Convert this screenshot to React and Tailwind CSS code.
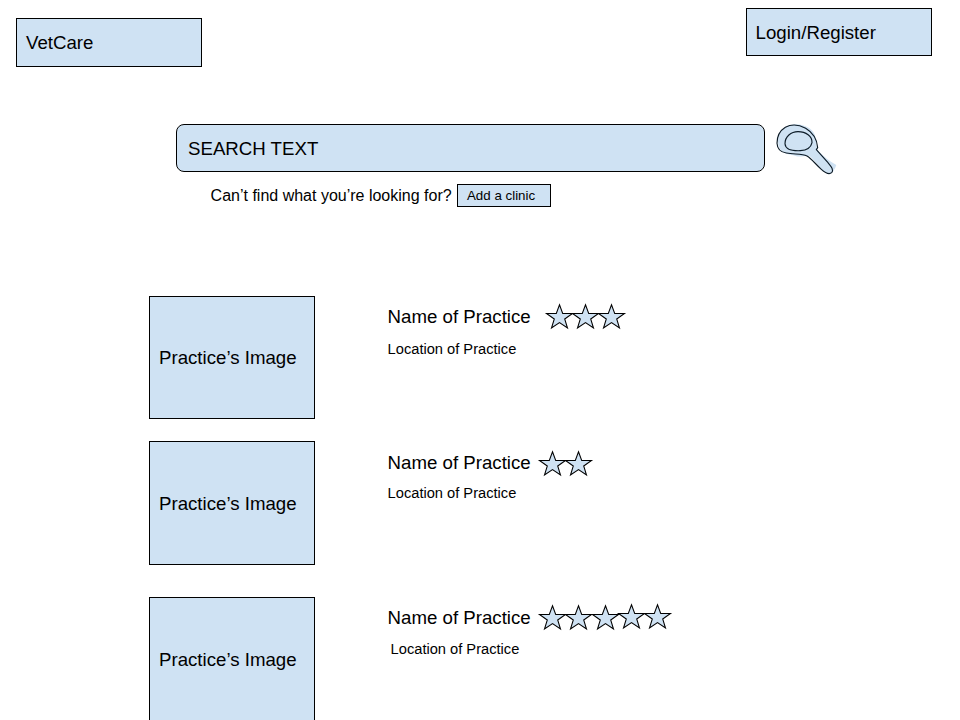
const FONT = "font-['Liberation_Sans',Arial,sans-serif]";

function Star({ raised, spaced }) {
  return (
    <svg
      className={`block w-[26px] h-[26px] shrink-0 overflow-visible ${raised ? "-mt-px" : ""} ${spaced ? "ml-px" : ""}`}
      viewBox="0 0 26 26"
    >
      <path
        d="M13.5 .7L16.7 9.5H26.5L18.7 15L21.5 24L13.5 18.6L5.5 24L8.3 15L.5 9.5H10.3Z"
        fill="#cfe2f3"
        stroke="#000"
        strokeWidth="1.05"
      />
    </svg>
  );
}

function Magnifier() {
  return (
    <svg className="block w-[90px] h-[75px] shrink-0" viewBox="0 0 270 225">
      <path
        d="M54 95C54 65 75 45 105 43C135 42 165 60 166 82C170 100 167 112 175 123C192 140 208 154 229 165C224 180 216 192 204 191C180 180 170 155 148 138C130 136 120 144 100 136C75 132 54 122 54 95Z"
        fill="#cfe2f3"
      />
      <g fill="none" stroke="#0b1a26" strokeWidth="3.4" strokeLinecap="round">
        <path d="M169 119L173 113C171 88 159 68 137 55C117 44 94 42 76 52C60 62 51 79 51 100C52 117 62 127 79 129C100 134 125 130 141 138C155 146 168 164 184 178C195 188 208 194 215 188C222 179 214 170 204 158L171 121" />
        <path d="M75 101C75 80 93 65 114 65C138 65 157 79 156 98C153 112 140 121 121 122C97 123 76 119 75 101Z" />
      </g>
    </svg>
  );
}

function Practice({ stars, raisedFrom = 99, spacedAt = 99, rowClass, imageClass, nameClass, starsClass, locationClass }) {
  return (
    <article className={`flex shrink-0 items-start ${rowClass}`}>
      <div
        className={`flex w-[166px] h-full shrink-0 items-center border border-black bg-[#cfe2f3] pl-[9px] text-[18.67px] leading-[22px] ${imageClass}`}
      >
        Practice’s Image
      </div>
      <div className="ml-[72.6px] pt-[10px]">
        <div className="flex h-[22px] items-start">
          <h2 className={`w-[143.4px] whitespace-nowrap text-[18.67px] leading-[22px] ${nameClass}`}>Name of Practice</h2>
          <div className={`flex ${starsClass}`}>
            {Array.from({ length: stars }, (_, i) => (
              <Star key={i} raised={i >= raisedFrom} spaced={i === spacedAt} />
            ))}
          </div>
        </div>
        <p className={`whitespace-nowrap text-[14.67px] leading-[18px] ${locationClass}`}>Location of Practice</p>
      </div>
    </article>
  );
}

export default function App() {
  return (
    <div className={`flex h-[720px] w-[960px] flex-col overflow-hidden bg-white text-black ${FONT}`}>
      <header className="flex h-[116px] shrink-0 items-start justify-between pl-4 pr-7 text-[18.67px] leading-[22px]">
        <div className="mt-[18px] flex h-[49px] w-[186px] items-center border border-black bg-[#cfe2f3] pl-[9px]">
          VetCare
        </div>
        <div className="mt-2 flex h-12 w-[186px] items-center border border-black bg-[#cfe2f3] pl-[8.6px] pt-[2px]">
          Login/Register
        </div>
      </header>

      <section className="flex h-[180px] shrink-0 flex-col">
        <div className="flex h-[68px] pl-[176px]">
          <div className="mt-2 flex h-12 w-[589px] shrink-0 items-center rounded-lg border border-black bg-[#cfe2f3] pl-[11px] pt-[2px] text-[18.67px]">
            SEARCH TEXT
          </div>
          <div className="-ml-[5px] -mt-[6px]">
            <Magnifier />
          </div>
        </div>
        <div className="flex h-[23px] items-center pl-[210.6px] text-base leading-5">
          <span className="w-[246.4px] whitespace-nowrap">Can’t find what you’re looking for?</span>
          <button className="flex h-[23px] w-[94px] items-center border border-black bg-[#cfe2f3] pl-[9px] pt-px text-[13.33px] leading-4">
            Add a clinic
          </button>
        </div>
      </section>

      <main className="flex shrink-0 flex-col pl-[149px]">
        <Practice stars={3} rowClass="h-[123px]" imageClass="" nameClass="" starsClass="ml-[15px] -mt-[2px]" locationClass="mt-[12px]" />
        <Practice stars={2} rowClass="mt-[22px] h-[124px]" imageClass="pt-[2px]" nameClass="pt-px" starsClass="ml-[8px]" locationClass="mt-[11px]" />
        <Practice stars={5} raisedFrom={3} spacedAt={2} rowClass="mt-8 h-[124px]" imageClass="pt-[2px]" nameClass="" starsClass="ml-[8px] -mt-[2px]" locationClass="mt-[11px] ml-[3px]" />
      </main>
    </div>
  );
}
